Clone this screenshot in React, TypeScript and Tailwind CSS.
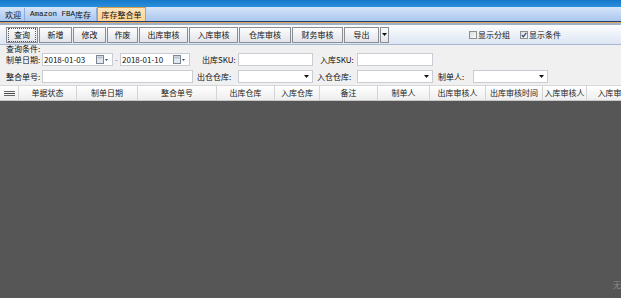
import React from "react";

const FONT = "font-['Noto_Sans_CJK_SC','Noto_Sans',sans-serif]";

const BUTTONS = [
  { label: "查询", w: "w-[32px]", focus: true },
  { label: "新增", w: "w-[33px]" },
  { label: "修改", w: "w-[33px]" },
  { label: "作废", w: "w-[31px]" },
  { label: "出库审核", w: "w-[49px]" },
  { label: "入库审核", w: "w-[49px]" },
  { label: "仓库审核", w: "w-[52px]" },
  { label: "财务审核", w: "w-[51px]" },
  { label: "导出", w: "w-[35px]" },
];

const COLUMNS = [
  { label: "", w: "w-[19px]" },
  { label: "单据状态", w: "w-[58px]" },
  { label: "制单日期", w: "w-[61px]" },
  { label: "整合单号", w: "w-[79px]" },
  { label: "出库仓库", w: "w-[58px]" },
  { label: "入库仓库", w: "w-[45px]" },
  { label: "备注", w: "w-[58px]" },
  { label: "制单人", w: "w-[52px]" },
  { label: "出库审核人", w: "w-[56px]" },
  { label: "出库审核时间", w: "w-[57px]" },
  { label: "入库审核人", w: "w-[44px]" },
  { label: "入库审核时间", w: "w-[70px]" },
];

function CalendarIcon() {
  return (
    <svg width="13" height="9" viewBox="0 0 13 9" className="shrink-0">
      <rect x="0.5" y="0.5" width="7" height="8" fill="#e4e8ee" stroke="#7d8794" />
      <rect x="1.5" y="1.5" width="5" height="2" fill="#b8c2ce" />
      <path d="M9 4 L12 4 L10.5 6 Z" fill="#2f4f86" />
    </svg>
  );
}

function DateBox({ value, w }: { value: string; w: string }) {
  return (
    <div className={`${w} h-[13px] flex items-center justify-between bg-white border border-[#c9cdd3] pl-[1px] pr-[3px]`}>
      <span className="text-[8px] leading-none text-[#111]">{value}</span>
      <CalendarIcon />
    </div>
  );
}

function TextBox({ w }: { w: string }) {
  return <div className={`${w} h-[13px] bg-white border border-[#c9cdd3]`} />;
}

function SelectBox({ w }: { w: string }) {
  return (
    <div className={`${w} h-[13px] flex items-center justify-end bg-white border border-[#c9cdd3] pr-[3px]`}>
      <svg width="5" height="3" viewBox="0 0 5 3">
        <path d="M0 0 L5 0 L2.5 3 Z" fill="#111" />
      </svg>
    </div>
  );
}

function Label({ text, w, className = "" }: { text: string; w: string; className?: string }) {
  return <span className={`${w} ${className} shrink-0 text-[8px] leading-none text-[#111] whitespace-nowrap`}>{text}</span>;
}

function CheckBox({ checked }: { checked?: boolean }) {
  return (
    <div className="w-[8px] h-[8px] border border-[#8e8f8f] bg-gradient-to-br from-[#dcdcdc] to-[#f8f8f8] flex items-center justify-center">
      {checked && (
        <svg width="6" height="6" viewBox="0 0 6 6">
          <path d="M0.8 3 L2.3 4.8 L5.3 0.8" stroke="#1d3a7a" strokeWidth="1.1" fill="none" />
        </svg>
      )}
    </div>
  );
}

export default function App() {
  return (
    <div className={`${FONT} w-[621px] h-[298px] overflow-hidden flex flex-col bg-[#f0f0f0]`}>
      {/* window top */}
      <div className="h-[7px] bg-gradient-to-b from-[#1579cc] to-[#2a8fdc]" />

      {/* tab strip */}
      <div className="h-[14px] flex items-end pl-[2px] bg-gradient-to-b from-[#d6e5f8] to-[#a9c7ee]">
        <div className="h-[13px] px-[3px] flex items-center border-r border-[#8fabd3] text-[8px] leading-none text-[#111]">欢迎</div>
        <div className="h-[13px] px-[5px] flex items-center border-r border-[#8fabd3] text-[8px] leading-none text-[#111]">
          <span className="font-['Liberation_Mono',monospace] text-[7.5px]">Amazon FBA</span>库存
        </div>
        <div className="h-[14px] w-[49px] flex items-center justify-center bg-gradient-to-b from-[#ffe6bd] to-[#ffd38f] border border-b-0 border-[#d59c4a] text-[8px] leading-none text-[#111]">
          库存整合单
        </div>
      </div>
      <div className="h-px bg-[#1f3f78]" />
      <div className="h-px bg-[#e3a55a]" />
      <div className="h-[2px] bg-[#9fb0c9]" />

      {/* toolbar */}
      <div className="h-[20px] flex items-center pl-[6px] bg-gradient-to-b from-[#fbfcfe] to-[#dde6f3] border-b border-[#a6b7d0]">
        {BUTTONS.map((b) => (
          <div
            key={b.label}
            className={`${b.w} h-[16px] mr-[1px] flex items-center justify-center border border-[#8a8d92] bg-gradient-to-b from-[#fdfdfd] to-[#e2e4e8] text-[8px] leading-none text-[#111]`}
          >
            {b.focus ? (
              <span className="w-full h-full flex items-center justify-center border border-dotted border-[#555] m-[1px]">{b.label}</span>
            ) : (
              b.label
            )}
          </div>
        ))}
        <div className="w-[9px] h-[16px] flex items-center justify-center border border-[#8a8d92] bg-gradient-to-b from-[#fdfdfd] to-[#e2e4e8]">
          <svg width="5" height="3" viewBox="0 0 5 3">
            <path d="M0 0 L5 0 L2.5 3 Z" fill="#111" />
          </svg>
        </div>
        <div className="ml-[80px] flex items-center gap-[1px]">
          <CheckBox />
          <span className="text-[8px] leading-none text-[#111]">显示分组</span>
        </div>
        <div className="ml-[10px] flex items-center gap-[1px]">
          <CheckBox checked />
          <span className="text-[8px] leading-none text-[#111]">显示条件</span>
        </div>
      </div>

      {/* query conditions */}
      <div className="h-[7px] pl-[6px] flex items-center">
        <span className="text-[8px] leading-none text-[#111]">查询条件:</span>
      </div>
      <div className="h-[13px] mt-[1px] pl-[6px] flex items-center">
        <Label text="制单日期:" w="w-[36px]" />
        <DateBox value="2018-01-03" w="w-[71px]" />
        <span className="w-[7px] text-center text-[8px] leading-none text-[#777]">-</span>
        <DateBox value="2018-01-10" w="w-[70px]" />
        <Label text="出库SKU:" w="w-[36px]" className="ml-[12px]" />
        <TextBox w="w-[75px]" />
        <Label text="入库SKU:" w="w-[37px]" className="ml-[7px]" />
        <TextBox w="w-[76px]" />
      </div>
      <div className="h-[13px] mt-[4px] pl-[6px] flex items-center">
        <Label text="整合单号:" w="w-[36px]" />
        <TextBox w="w-[151px]" />
        <Label text="出仓仓库:" w="w-[41px]" className="ml-[4px]" />
        <SelectBox w="w-[75px]" />
        <Label text="入仓仓库:" w="w-[40px]" className="ml-[4px]" />
        <SelectBox w="w-[76px]" />
        <Label text="制单人:" w="w-[35px]" className="ml-[5px]" />
        <SelectBox w="w-[75px]" />
      </div>

      {/* grid header */}
      <div className="h-[15px] mt-[2px] flex bg-gradient-to-b from-[#ffffff] to-[#eeeeee] border-t border-[#d8d8d8] shrink-0">
        {COLUMNS.map((c, i) => (
          <div
            key={i}
            className={`${c.w} shrink-0 h-full flex items-center justify-center border-r border-[#d4d4d4] text-[8px] leading-none text-[#222] whitespace-nowrap overflow-hidden`}
          >
            {i === 0 ? (
              <svg width="11" height="5" viewBox="0 0 11 5">
                <rect x="0" y="0" width="11" height="1" fill="#666" />
                <rect x="0" y="2" width="11" height="1" fill="#444" />
                <rect x="0" y="4" width="11" height="1" fill="#666" />
              </svg>
            ) : (
              c.label
            )}
          </div>
        ))}
      </div>

      {/* grid body */}
      <div className="relative flex-1 bg-[#565656] border-t border-[#c8c8c8]">
        <span className="absolute left-[613px] bottom-[9px] text-[8px] leading-none text-[#8a8a8a] whitespace-nowrap">无数据</span>
      </div>
    </div>
  );
}
